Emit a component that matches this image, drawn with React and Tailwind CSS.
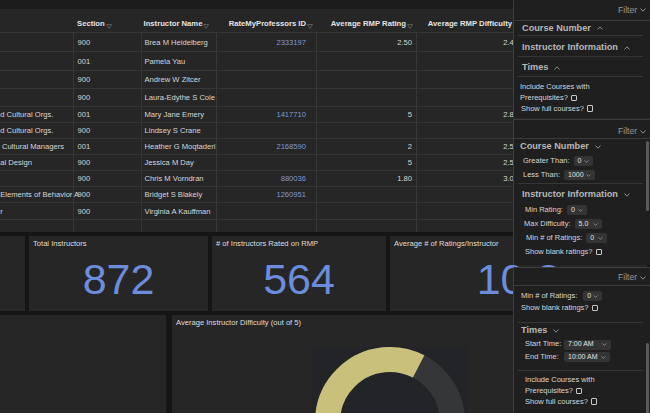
import React from 'react';

const rows = [
  { h: 'h-[19px]', course: '', section: '900', name: 'Brea M Heidelberg', rmp: '2333197', rating: '2.50', diff: '2.44' },
  { h: 'h-[19px]', course: '', section: '001', name: 'Pamela Yau' },
  { h: 'h-[18px]', course: '', section: '900', name: 'Andrew W Zitcer' },
  { h: 'h-[18px]', course: '', section: '900', name: 'Laura-Edythe S Cole' },
  { h: 'h-[16px]', course: 'nd Cultural Orgs.', section: '001', name: 'Mary Jane Emery', rmp: '1417710', rating: '5', diff: '2.80' },
  { h: 'h-[16px]', course: 'nd Cultural Orgs.', section: '900', name: 'Lindsey S Crane' },
  { h: 'h-[16px]', course: 's Cultural Managers', section: '001', name: 'Heather G Moqtaderi', rmp: '2168590', rating: '2', diff: '2.50' },
  { h: 'h-[16px]', course: 'nal Design', section: '900', name: 'Jessica M Day', rating: '5', diff: '2.50' },
  { h: 'h-[16px]', course: '', section: '900', name: 'Chris M Vorndran', rmp: '880036', rating: '1.80', diff: '3.00' },
  { h: 'h-[16px]', course: 'f Elements of Behavior A', section: '900', name: 'Bridget S Blakely', rmp: '1260951' },
  { h: 'h-[17px]', course: 'er', section: '900', name: 'Virginia A Kauffman' },
];

const grid = 'grid grid-cols-[74px_67.5px_75px_100.5px_100px_106px_1fr]';
const line = 'border-r border-[#363636]';

function SortIcon() {
  return (
    <svg viewBox="0 0 6 5" className="w-[6px] h-[5px] ml-[1px] mb-[-1px] shrink-0" fill="none" stroke="#6e6e6e" strokeWidth="0.7">
      <polygon points="0.5,0.5 5.5,0.5 3,4.5" />
    </svg>
  );
}

function Chevron({ up = false, className = 'w-[6px] h-[4px] text-[#9a9a9a]' }) {
  return (
    <svg viewBox="0 0 6 4" className={className} fill="none" stroke="currentColor" strokeWidth="0.9">
      <polyline points={up ? '0.5,3.5 3,0.8 5.5,3.5' : '0.5,0.5 3,3.2 5.5,0.5'} />
    </svg>
  );
}

function Select({ value, w }) {
  return (
    <span className={`${w} h-[10px] bg-[#343434] rounded-[2px] flex items-center justify-between px-[4px] text-[7px] text-[#e2e2e2]`}>
      {value}
      <Chevron className="w-[5px] h-[3px] text-[#aaaaaa]" />
    </span>
  );
}

function Check() {
  return <span className="inline-block w-[6.5px] h-[6.5px] border border-[#c8c8c8] rounded-[1px] ml-[3px] align-middle" />;
}

function FilterHead({ h, pad }) {
  return (
    <div className={`${h} ${pad} border-b border-[#3a3a3a] flex justify-end pr-[4px] gap-[3px] text-[8.5px] leading-[9px] text-[#9a9a9a]`}>
      Filter
      <Chevron className="w-[6px] h-[4px] text-[#9a9a9a] mb-[2px]" />
    </div>
  );
}

function Title({ children, up }) {
  return (
    <span className="flex items-center gap-[6px] text-[9.2px] font-bold text-[#b6b6b6] leading-[11px]">
      {children}
      <Chevron up={up} />
    </span>
  );
}

function Card({ title, value, w }) {
  return (
    <div className={`${w} shrink-0 bg-[#262626] flex flex-col`}>
      <div className="pl-[4px] pt-[4px] text-[7.6px] leading-[8px] text-[#dedede] whitespace-nowrap">{title}</div>
      <div className="flex-1 flex items-center justify-center text-[43px] leading-none text-[#6b8ddb]">{value}</div>
    </div>
  );
}

export default function App() {
  return (
    <div className="relative w-[650px] h-[413px] overflow-hidden bg-[#151515] font-['Liberation_Sans',Arial,sans-serif]">
      <div className="flex flex-col h-full">
        <div className="h-[9px] bg-[#1c1c1c] shrink-0" />

        {/* table */}
        <div className="h-[223px] shrink-0 bg-[#262626] flex flex-col">
          <div className={`${grid} h-[24px] border-b border-[#363636] text-[7.7px] font-bold text-[#e4e4e4] leading-[9px] whitespace-nowrap`}>
            <div />
            <div className="flex items-end pl-[3px] pb-[4px]">Section<SortIcon /></div>
            <div className="flex items-end pl-[2px] pb-[4px]">Instructor Name<SortIcon /></div>
            <div className="flex items-end justify-end pr-[4px] pb-[4px]">RateMyProfessors ID<SortIcon /></div>
            <div className="flex items-end justify-end pr-[4px] pb-[4px]">Average RMP Rating<SortIcon /></div>
            <div className="flex items-end justify-end pr-[4px] pb-[4px]">Average RMP Difficulty<SortIcon /></div>
            <div />
          </div>
          {rows.map((r, i) => (
            <div key={i} className={`${grid} ${r.h} border-b border-[#363636] text-[7.6px] text-[#d6d6d6] leading-[9px] whitespace-nowrap`}>
              <div className={`flex items-center ${line}`}><span className="ml-[-4px]">{r.course}</span></div>
              <div className={`flex items-center pl-[3.5px] ${line}`}>{r.section}</div>
              <div className={`flex items-center pl-[3px] overflow-hidden ${line}`}>{r.name}</div>
              <div className={`flex items-center justify-end pr-[10px] text-[#7f97d6] ${line}`}>{r.rmp}</div>
              <div className={`flex items-center justify-end pr-[4px] ${line}`}>{r.rating}</div>
              <div className={`flex items-center justify-end pr-[4px] ${line}`}>{r.diff}</div>
              <div />
            </div>
          ))}
          <div className={`${grid} flex-1`}>
            <div className={line} />
            <div className={line} />
            <div className={line} />
            <div className={line} />
            <div className={line} />
            <div className={line} />
            <div />
          </div>
        </div>

        <div className="h-[4px] shrink-0" />

        {/* summary cards */}
        <div className="h-[75px] shrink-0 flex gap-[4px] pr-[3px]">
          <div className="w-[25px] shrink-0 bg-[#262626]" />
          <Card w="w-[179px]" title="Total Instructors" value="872" />
          <Card w="w-[174px]" title="# of Instructors Rated on RMP" value="564" />
          <Card w="flex-1" title="Average # of Ratings/Instructor" value="10.3" />
        </div>

        <div className="h-[4px] shrink-0" />

        <div className="flex-1 flex gap-[6px] pr-[3px]">
          <div className="w-[166px] shrink-0 bg-[#262626]" />
          <div className="flex-1 bg-[#262626] flex flex-col">
            <div className="pl-[4px] pt-[4px] text-[7.6px] leading-[8px] text-[#dedede]">Average Instructor Difficulty (out of 5)</div>
            <svg width="156" height="66" viewBox="0 0 156 66" className="block mt-[20px] ml-[140px]">
              <rect width="156" height="66" fill="#222428" />
              <circle cx="78" cy="75" r="62.5" fill="none" stroke="#353638" strokeWidth="25" />
              <circle cx="78" cy="75" r="62.5" fill="none" stroke="#c9c07c" strokeWidth="25" strokeDasharray="225.8 400" transform="rotate(90 78 75)" />
            </svg>
          </div>
        </div>
      </div>

      {/* filter panels over the dashboard */}
      <div className="absolute top-0 right-0 w-[137px] h-full flex flex-col text-[7.5px] leading-[10.5px] text-[#d5d5d5]">
        {/* panel 1: collapsed */}
        <div className="h-[118px] shrink-0 bg-[#1f1f1f] border-l border-[#3d3d3d] flex flex-col">
          <FilterHead h="h-[21px]" pad="items-center pt-[1px]" />
          <div className="h-[15px] ml-[4px] mr-[7px] pl-[4px] border-b border-[#363636] flex items-center">
            <Title up>Course Number</Title>
          </div>
          <div className="h-[21px] ml-[4px] mr-[7px] pl-[4px] pt-[3px] border-b border-[#363636] flex items-center">
            <Title up>Instructor Information</Title>
          </div>
          <div className="h-[20px] ml-[4px] mr-[7px] pl-[4px] pt-[2px] border-b border-[#363636] flex items-center">
            <Title up>Times</Title>
          </div>
          <div className="pt-[5px] pl-[6px]">
            <div>Include Courses with</div>
            <div className="flex items-center">Prerequisites?<Check /></div>
            <div className="flex items-center pl-[1px] leading-[11px]">Show full courses?<Check /></div>
          </div>
        </div>

        {/* panel 2: course number + instructor open */}
        <div className="relative h-[146px] mt-[1px] shrink-0 bg-[#1f1f1f] border-l border-t border-[#3d3d3d] flex flex-col overflow-hidden">
          <FilterHead h="h-[19px]" pad="items-end pb-[2px]" />
          <div className="ml-[4px] mr-[7px] pb-[1px] border-b border-[#363636]">
            <div className="h-[15px] pl-[2px] flex items-center"><Title>Course Number</Title></div>
            <div className="h-[14px] pl-[5px] flex items-center gap-[4px]">Greater Than:<Select value="0" w="w-[19px]" /></div>
            <div className="h-[14px] pl-[5px] flex items-center gap-[4px]">Less Than:<Select value="1000" w="w-[31px]" /></div>
          </div>
          <div className="ml-[4px] mr-[7px]">
            <div className="h-[19px] pl-[4px] pt-[2px] flex items-center"><Title>Instructor Information</Title></div>
            <div className="h-[14px] pl-[7px] flex items-center gap-[4px]">Min Rating:<Select value="0" w="w-[20px]" /></div>
            <div className="h-[14px] pl-[6px] flex items-center gap-[4px]">Max Difficulty:<Select value="5.0" w="w-[27px]" /></div>
            <div className="h-[14px] pl-[8px] flex items-center gap-[4px]">Min # of Ratings:<Select value="0" w="w-[21px]" /></div>
            <div className="h-[14px] pl-[7px] flex items-center">Show blank ratings?<Check /></div>
          </div>
          <div className="absolute right-[1px] top-[21px] w-[3px] h-[70px] rounded-full bg-[#5a5a5a]" />
        </div>

        {/* panel 3: scrolled down */}
        <div className="relative flex-1 mt-[2px] bg-[#1f1f1f] border-l border-t border-[#3d3d3d] flex flex-col overflow-hidden">
          <FilterHead h="h-[18px]" pad="items-end pb-[3px]" />
          <div className="ml-[4px] mr-[7px] pt-[4px] pb-[8px] border-b border-[#363636]">
            <div className="h-[12px] pl-[3px] flex items-center gap-[6px]">Min # of Ratings:<Select value="0" w="w-[19px]" /></div>
            <div className="h-[12px] pl-[3px] flex items-center">Show blank ratings?<Check /></div>
          </div>
          <div className="ml-[4px] mr-[7px] pb-[7px] border-b border-[#363636]">
            <div className="h-[15px] pl-[3px] flex items-center"><Title>Times</Title></div>
            <div className="h-[13px] pl-[7px] flex items-center">
              <span className="w-[39px]">Start Time:</span>
              <Select value="7:00 AM" w="w-[47px]" />
            </div>
            <div className="h-[12px] pl-[7px] flex items-center">
              <span className="w-[39px]">End Time:</span>
              <Select value="10:00 AM" w="w-[46px]" />
            </div>
          </div>
          <div className="pt-[4px] pl-[11px]">
            <div>Include Courses with</div>
            <div className="flex items-center">Prerequisites?<Check /></div>
            <div className="flex items-center leading-[11px]">Show full courses?<Check /></div>
          </div>
          <div className="absolute right-[1px] top-[75px] w-[3px] h-[80px] rounded-full bg-[#5a5a5a]" />
        </div>
      </div>
    </div>
  );
}
